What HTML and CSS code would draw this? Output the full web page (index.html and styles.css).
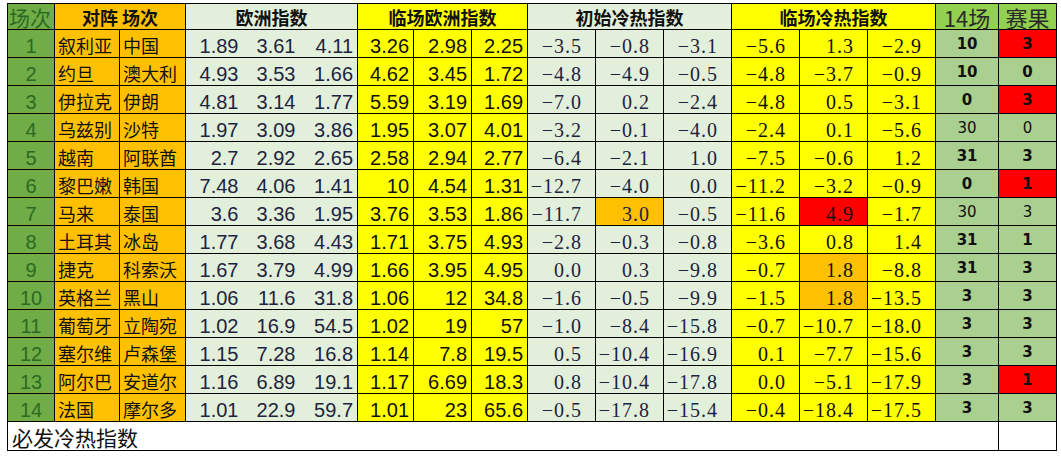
FILE: index.html
```html
<!DOCTYPE html>
<html lang="zh-CN">
<head>
<meta charset="utf-8">
<title>必发冷热指数</title>
<link rel="stylesheet" href="styles.css">
</head>
<body>
<div class="sheet">
<table class="grid">
<colgroup>
<col class="w-no"><col class="w-t1"><col class="w-t2">
<col class="w-57"><col class="w-57"><col class="w-58">
<col class="w-56"><col class="w-58"><col class="w-56">
<col class="w-68"><col class="w-68"><col class="w-68">
<col class="w-68"><col class="w-68"><col class="w-68">
<col class="w-63"><col class="w-58">
</colgroup>
<thead>
<tr class="head">
<th class="h-no">场次</th>
<th colspan="2" class="h-team">对阵 场次</th>
<th colspan="3" class="h-eu">欧洲指数</th>
<th colspan="3" class="h-le">临场欧洲指数</th>
<th colspan="3" class="h-ci">初始冷热指数</th>
<th colspan="3" class="h-lc">临场冷热指数</th>
<th class="h-14">14场</th>
<th class="h-res">赛果</th>
</tr>
</thead>
<tbody>
<tr><td class="no">1</td><td class="team">叙利亚</td><td class="team">中国</td><td class="eu e1">1.89</td><td class="eu e2">3.61</td><td class="eu e3">4.11</td><td class="le">3.26</td><td class="le">2.98</td><td class="le">2.25</td><td class="ci">−3.5</td><td class="ci">−0.8</td><td class="ci">−3.1</td><td class="lc">−5.6</td><td class="lc">1.3</td><td class="lc">−2.9</td><td class="k14 b">10</td><td class="res b red">3</td></tr>
<tr><td class="no">2</td><td class="team">约旦</td><td class="team">澳大利</td><td class="eu e1">4.93</td><td class="eu e2">3.53</td><td class="eu e3">1.66</td><td class="le">4.62</td><td class="le">3.45</td><td class="le">1.72</td><td class="ci">−4.8</td><td class="ci">−4.9</td><td class="ci">−0.5</td><td class="lc">−4.8</td><td class="lc">−3.7</td><td class="lc">−0.9</td><td class="k14 b">10</td><td class="res b">0</td></tr>
<tr><td class="no">3</td><td class="team">伊拉克</td><td class="team">伊朗</td><td class="eu e1">4.81</td><td class="eu e2">3.14</td><td class="eu e3">1.77</td><td class="le">5.59</td><td class="le">3.19</td><td class="le">1.69</td><td class="ci">−7.0</td><td class="ci">0.2</td><td class="ci">−2.4</td><td class="lc">−4.8</td><td class="lc">0.5</td><td class="lc">−3.1</td><td class="k14 b">0</td><td class="res b red">3</td></tr>
<tr><td class="no">4</td><td class="team">乌兹别</td><td class="team">沙特</td><td class="eu e1">1.97</td><td class="eu e2">3.09</td><td class="eu e3">3.86</td><td class="le">1.95</td><td class="le">3.07</td><td class="le">4.01</td><td class="ci">−3.2</td><td class="ci">−0.1</td><td class="ci">−4.0</td><td class="lc">−2.4</td><td class="lc">0.1</td><td class="lc">−5.6</td><td class="k14">30</td><td class="res">0</td></tr>
<tr><td class="no">5</td><td class="team">越南</td><td class="team">阿联酋</td><td class="eu e1">2.7</td><td class="eu e2">2.92</td><td class="eu e3">2.65</td><td class="le">2.58</td><td class="le">2.94</td><td class="le">2.77</td><td class="ci">−6.4</td><td class="ci">−2.1</td><td class="ci">1.0</td><td class="lc">−7.5</td><td class="lc">−0.6</td><td class="lc">1.2</td><td class="k14 b">31</td><td class="res b">3</td></tr>
<tr><td class="no">6</td><td class="team">黎巴嫩</td><td class="team">韩国</td><td class="eu e1">7.48</td><td class="eu e2">4.06</td><td class="eu e3">1.41</td><td class="le">10</td><td class="le">4.54</td><td class="le">1.31</td><td class="ci">−12.7</td><td class="ci">−4.0</td><td class="ci">0.0</td><td class="lc">−11.2</td><td class="lc">−3.2</td><td class="lc">−0.9</td><td class="k14 b">0</td><td class="res b red">1</td></tr>
<tr><td class="no">7</td><td class="team">马来</td><td class="team">泰国</td><td class="eu e1">3.6</td><td class="eu e2">3.36</td><td class="eu e3">1.95</td><td class="le">3.76</td><td class="le">3.53</td><td class="le">1.86</td><td class="ci">−11.7</td><td class="ci hot">3.0</td><td class="ci">−0.5</td><td class="lc">−11.6</td><td class="lc red">4.9</td><td class="lc">−1.7</td><td class="k14">30</td><td class="res">3</td></tr>
<tr><td class="no">8</td><td class="team">土耳其</td><td class="team">冰岛</td><td class="eu e1">1.77</td><td class="eu e2">3.68</td><td class="eu e3">4.43</td><td class="le">1.71</td><td class="le">3.75</td><td class="le">4.93</td><td class="ci">−2.8</td><td class="ci">−0.3</td><td class="ci">−0.8</td><td class="lc">−3.6</td><td class="lc">0.8</td><td class="lc">1.4</td><td class="k14 b">31</td><td class="res b">1</td></tr>
<tr><td class="no">9</td><td class="team">捷克</td><td class="team">科索沃</td><td class="eu e1">1.67</td><td class="eu e2">3.79</td><td class="eu e3">4.99</td><td class="le">1.66</td><td class="le">3.95</td><td class="le">4.95</td><td class="ci">0.0</td><td class="ci">0.3</td><td class="ci">−9.8</td><td class="lc">−0.7</td><td class="lc hot">1.8</td><td class="lc">−8.8</td><td class="k14 b">31</td><td class="res b">3</td></tr>
<tr><td class="no">10</td><td class="team">英格兰</td><td class="team">黑山</td><td class="eu e1">1.06</td><td class="eu e2">11.6</td><td class="eu e3">31.8</td><td class="le">1.06</td><td class="le">12</td><td class="le">34.8</td><td class="ci">−1.6</td><td class="ci">−0.5</td><td class="ci">−9.9</td><td class="lc">−1.5</td><td class="lc hot">1.8</td><td class="lc">−13.5</td><td class="k14 b">3</td><td class="res b">3</td></tr>
<tr><td class="no">11</td><td class="team">葡萄牙</td><td class="team">立陶宛</td><td class="eu e1">1.02</td><td class="eu e2">16.9</td><td class="eu e3">54.5</td><td class="le">1.02</td><td class="le">19</td><td class="le">57</td><td class="ci">−1.0</td><td class="ci">−8.4</td><td class="ci">−15.8</td><td class="lc">−0.7</td><td class="lc">−10.7</td><td class="lc">−18.0</td><td class="k14 b">3</td><td class="res b">3</td></tr>
<tr><td class="no">12</td><td class="team">塞尔维</td><td class="team">卢森堡</td><td class="eu e1">1.15</td><td class="eu e2">7.28</td><td class="eu e3">16.8</td><td class="le">1.14</td><td class="le">7.8</td><td class="le">19.5</td><td class="ci">0.5</td><td class="ci">−10.4</td><td class="ci">−16.9</td><td class="lc">0.1</td><td class="lc">−7.7</td><td class="lc">−15.6</td><td class="k14 b">3</td><td class="res b">3</td></tr>
<tr><td class="no">13</td><td class="team">阿尔巴</td><td class="team">安道尔</td><td class="eu e1">1.16</td><td class="eu e2">6.89</td><td class="eu e3">19.1</td><td class="le">1.17</td><td class="le">6.69</td><td class="le">18.3</td><td class="ci">0.8</td><td class="ci">−10.4</td><td class="ci">−17.8</td><td class="lc">0.0</td><td class="lc">−5.1</td><td class="lc">−17.9</td><td class="k14 b">3</td><td class="res b red">1</td></tr>
<tr><td class="no">14</td><td class="team">法国</td><td class="team">摩尔多</td><td class="eu e1">1.01</td><td class="eu e2">22.9</td><td class="eu e3">59.7</td><td class="le">1.01</td><td class="le">23</td><td class="le">65.6</td><td class="ci">−0.5</td><td class="ci">−17.8</td><td class="ci">−15.4</td><td class="lc">−0.4</td><td class="lc">−18.4</td><td class="lc">−17.5</td><td class="k14 b">3</td><td class="res b">3</td></tr>
</tbody>
<tfoot>
<tr class="foot-row"><td colspan="16" class="foot">必发冷热指数</td><td class="foot-end"></td></tr>
</tfoot>
</table>
</div>
</body>
</html>
```

FILE: styles.css
```css
html, body {
  margin: 0;
  padding: 0;
  background: #ffffff;
}

.sheet {
  padding: 3px 0 0 7px;
}

.grid {
  border-collapse: collapse;
  table-layout: fixed;
  width: 1050px;
  font-family: "Noto Sans CJK SC", sans-serif;
  color: #111;
}

.w-no { width: 47px; }
.w-t1 { width: 65px; }
.w-t2 { width: 66px; }
.w-56 { width: 56px; }
.w-57 { width: 57px; }
.w-58 { width: 58px; }
.w-63 { width: 63px; }
.w-68 { width: 68px; }

.grid th,
.grid td {
  border: 1px solid #000;
  padding: 0;
  vertical-align: bottom;
  white-space: nowrap;
}

.grid td {
  overflow: hidden;
}

/* header */
.head { height: 26px; }

.head th {
  font-family: "Noto Sans CJK SC", sans-serif;
  font-size: 18px;
  font-weight: bold;
  line-height: 20px;
  padding-bottom: 2px;
  text-align: center;
  color: #111;
  overflow: visible;
}

.head th.h-no {
  background: #70ad47;
  color: #2b6a22;
  font-weight: normal;
  font-size: 21px;
  line-height: 24px;
  padding-bottom: 0;
  text-align: left;
  padding-left: 1px;
}

.h-team { background: #ffc000; }
.h-eu { background: #e2efda; }
.h-le { background: #ffff00; }
.h-ci { background: #e2efda; }
.h-lc { background: #ffff00; }

.head th.h-14,
.head th.h-res {
  background: #92d050;
  font-weight: normal;
  font-size: 22px;
  line-height: 24px;
  padding-bottom: 0;
  color: #2a2a2a;
}

/* body rows */
.grid tbody tr { height: 28px; }

.no {
  background: #70ad47;
  color: #2b6a22;
  text-align: center;
  font-family: "Liberation Sans", Arial, sans-serif;
  font-size: 20px;
  line-height: 22px;
}

.grid td.team {
  background: #ffc000;
  font-size: 18px;
  line-height: 20px;
  padding-left: 3px;
  padding-bottom: 2px;
}

.grid td.eu,
.grid td.le {
  font-family: "Liberation Sans", Arial, sans-serif;
  font-size: 20px;
  line-height: 22px;
  text-align: right;
  padding-right: 4px;
}

.eu {
  background: #e2efda;
  color: #1d2340;
}

.grid td.e1 { border-right: none; }
.grid td.e2 { border-left: none; border-right: none; }
.grid td.e3 { border-left: none; }

.le {
  background: #ffff00;
  color: #111;
}

.grid td.ci,
.grid td.lc {
  font-family: "Liberation Serif", "Times New Roman", serif;
  font-size: 20px;
  line-height: 22px;
  letter-spacing: 1px;
  text-align: right;
  padding-right: 13px;
}

.ci {
  background: #e2efda;
  color: #1d2340;
}

.lc {
  background: #ffff00;
  color: #111;
}

.grid td.k14,
.grid td.res {
  background: #a9d08e;
  text-align: center;
  font-family: "DejaVu Sans", sans-serif;
  font-size: 15px;
  line-height: 20px;
  padding-bottom: 3px;
  color: #111;
}

.b { font-weight: bold; }

.grid td.hot { background: #ffc000; }
.grid td.red { background: #ff0000; }

/* footer */
.foot-row { height: 29px; }

.grid td.foot {
  background: #ffffff;
  font-size: 21px;
  line-height: 24px;
  padding-left: 4px;
  padding-bottom: 1px;
  text-align: left;
}

.foot-end { background: #ffffff; }
```
